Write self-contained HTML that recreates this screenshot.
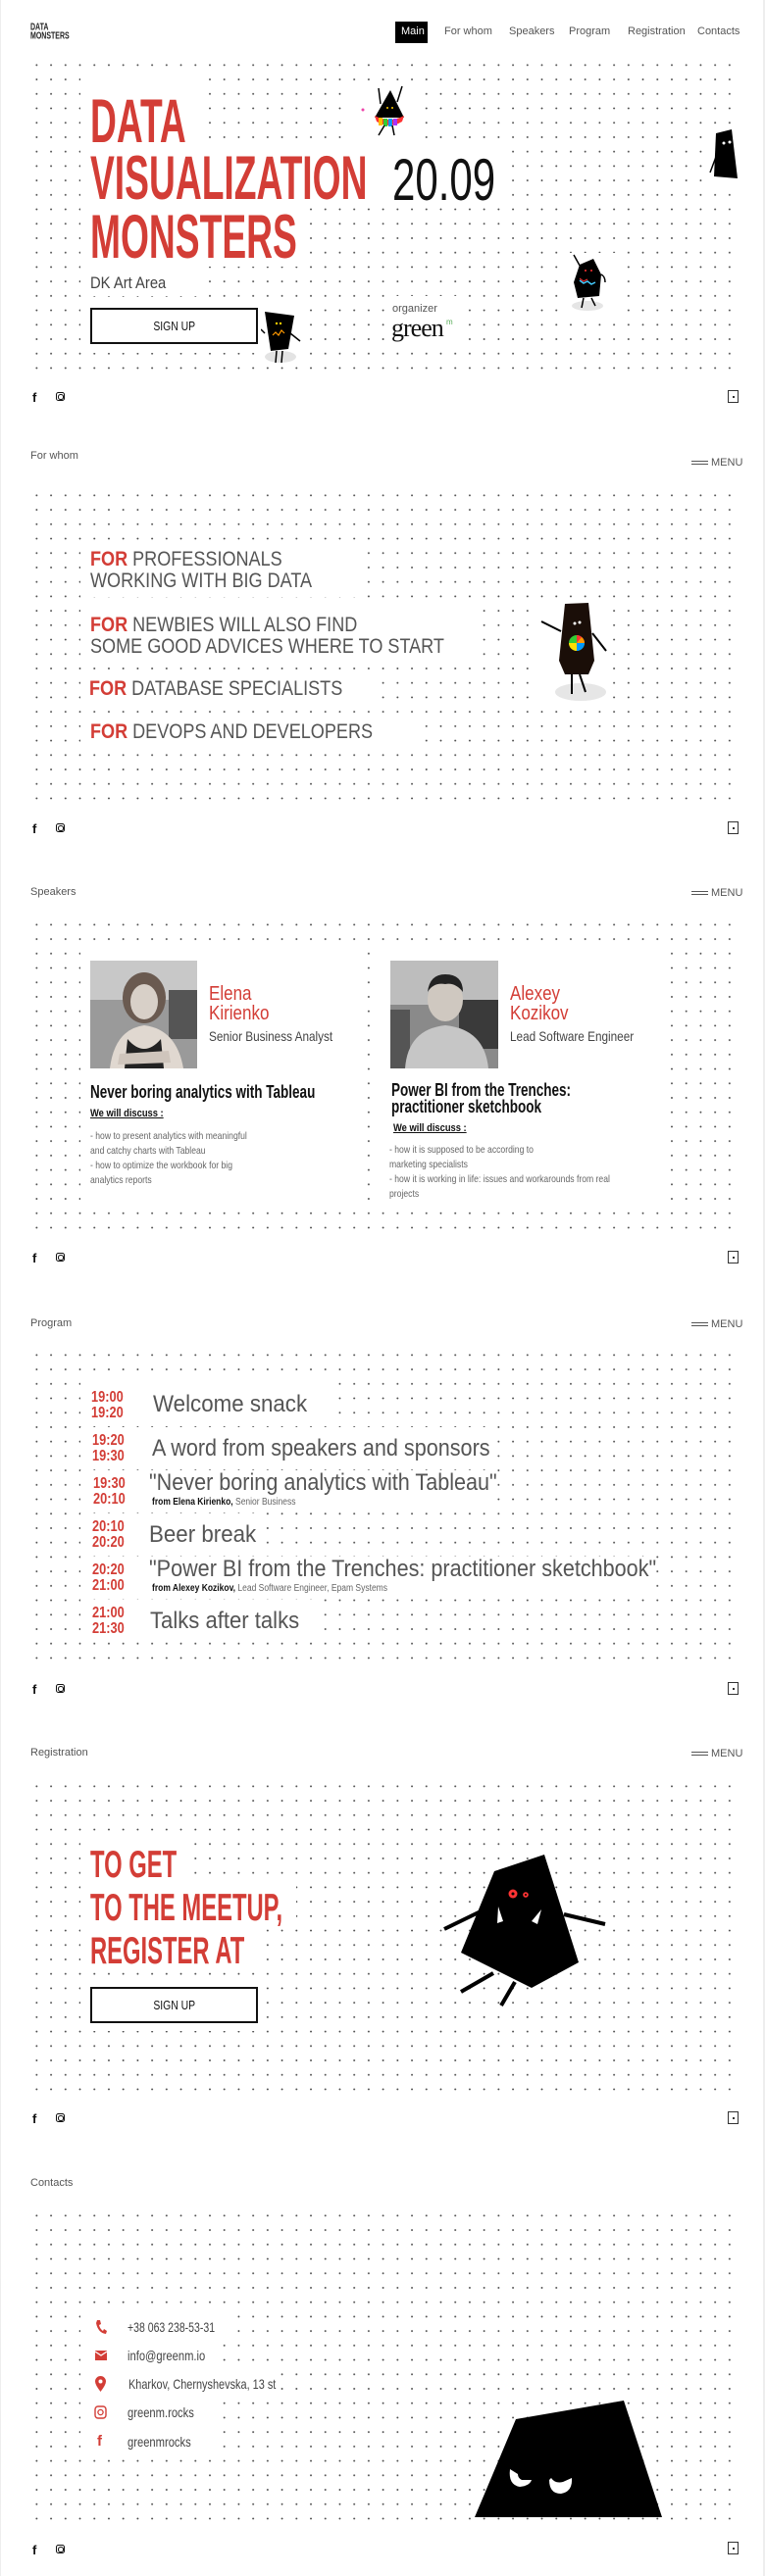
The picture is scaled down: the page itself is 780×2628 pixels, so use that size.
<!DOCTYPE html>
<html><head><meta charset="utf-8">
<style>
*{margin:0;padding:0;box-sizing:border-box}
body{width:780px;height:2628px;background:#fff;font-family:"Liberation Sans",sans-serif;color:#222;position:relative;overflow:hidden}
.a{position:absolute;white-space:nowrap;line-height:1}
.dots{position:absolute;left:30px;width:722px;height:324px;background-image:radial-gradient(circle at center,#444 0,#444 0.7px,transparent 1.1px);background-size:14.72px 14.72px}
.w{position:absolute;background:#fff}
.sc{transform-origin:0 0}
.red{color:#d33d36}
.lbl{font-size:11px;color:#555}
.menu{font-size:11px;color:#555}
.menu i{position:absolute;left:-20px;width:17px;height:4px;border-top:1px solid #555;border-bottom:1px solid #555;top:3px}
.btn{position:absolute;border:2px solid #111;background:#fff;width:171px;height:37px;text-align:center;font-size:13px;line-height:33px;color:#111}
.btn span{display:inline-block;transform:scaleX(.8)}
.sq{position:absolute;left:742px;width:11px;height:13px;border:1px solid #333}
.sq:after{content:"";position:absolute;left:4px;top:5px;width:2px;height:2px;background:#333}
.fb{position:absolute;left:33px;font-weight:bold;font-size:13px;line-height:1;color:#111}
.ig{position:absolute;left:57px;width:9px;height:9px;border:1.3px solid #111;border-radius:2.5px}
.ig:after{content:"";position:absolute;left:1.3px;top:1.3px;width:3.5px;height:3.5px;border:1.2px solid #111;border-radius:50%}
</style></head><body>
<div style="position:absolute;left:0;top:0;width:1px;height:2628px;background:#eee"></div>
<div style="position:absolute;right:0;top:0;width:2px;height:2628px;background:#eee"></div>

<!-- HERO -->
<div class="a sc" style="left:31px;top:23px;font-size:10px;font-weight:bold;transform:scale(.7,1.05)">DATA</div>
<div class="a sc" style="left:31px;top:32px;font-size:10px;font-weight:bold;transform:scale(.7,1.05)">MONSTERS</div>
<div style="position:absolute;left:403px;top:22px;width:33px;height:22px;background:#000"></div>
<div class="a" style="left:409px;top:27px;font-size:11px;color:#fff">Main</div>
<div class="a" style="left:453px;top:27px;font-size:11px;color:#555">For whom</div>
<div class="a" style="left:519px;top:27px;font-size:11px;color:#555">Speakers</div>
<div class="a" style="left:580px;top:27px;font-size:11px;color:#555">Program</div>
<div class="a" style="left:640px;top:27px;font-size:11px;color:#555">Registration</div>
<div class="a" style="left:711px;top:27px;font-size:11px;color:#555">Contacts</div>

<div class="dots" style="top:58.6px"></div>
<div class="w" style="left:82px;top:80px;width:120px;height:72px"></div>
<div class="w" style="left:82px;top:150px;width:435px;height:62px"></div>
<div class="w" style="left:82px;top:210px;width:232px;height:62px"></div>
<div class="w" style="left:82px;top:272px;width:123px;height:30px"></div>
<div class="w" style="left:82px;top:305px;width:188px;height:55px"></div>
<div class="w" style="left:392px;top:302px;width:78px;height:52px"></div>
<div class="w" style="left:355px;top:84px;width:72px;height:58px"></div>
<div class="w" style="left:570px;top:258px;width:58px;height:62px"></div>
<div class="w" style="left:264px;top:312px;width:48px;height:60px"></div>
<div class="w" style="left:716px;top:128px;width:40px;height:60px"></div>

<div class="a sc red" style="left:92px;top:94px;font-size:48px;font-weight:bold;transform:scale(.775,1.31)">DATA</div>
<div class="a sc red" style="left:92px;top:152px;font-size:48px;font-weight:bold;transform:scale(.775,1.31)">VISUALIZATION</div>
<div class="a sc red" style="left:92px;top:212px;font-size:48px;font-weight:bold;transform:scale(.775,1.31)">MONSTERS</div>
<div class="a sc" style="left:400px;top:154px;font-size:60px;color:#111;transform:scaleX(.7)">20.09</div>
<div class="a sc" style="left:92px;top:280px;font-size:17px;color:#444;transform:scaleX(.87)">DK Art Area</div>
<div class="btn" style="left:92px;top:314px"><span>SIGN UP</span></div>
<div class="a" style="left:400px;top:310px;font-size:11px;color:#555">organizer</div>
<div class="a" style="left:399px;top:322px;font-family:'Liberation Serif',serif;font-size:26px;letter-spacing:-1px;color:#111">green</div>
<div class="a" style="left:455px;top:325px;font-size:8px;color:#5a5">m</div>

<svg style="position:absolute;left:360px;top:86px" width="66" height="56" viewBox="0 0 66 56">
<line x1="28" y1="20" x2="26" y2="4" stroke="#000" stroke-width="1.5"/><line x1="45" y1="18" x2="50" y2="2" stroke="#000" stroke-width="1.5"/>
<polygon points="38,6 52,34 22,34" fill="#000"/>
<path d="M22,32 Q37,40 52,32 L50,38 Q37,46 24,38Z" fill="#f33"/>
<path d="M26,34 h4 v8 h-4z" fill="#fb0"/><path d="M31,35 h4 v8 h-4z" fill="#3c3"/><path d="M36,35 h4 v8 h-4z" fill="#09f"/><path d="M41,35 h4 v7 h-4z" fill="#a3f"/>
<circle cx="35" cy="24" r="1" fill="#fc0"/><circle cx="40" cy="24" r="1" fill="#fc0"/>
<line x1="32" y1="42" x2="26" y2="52" stroke="#000" stroke-width="1.5"/><line x1="40" y1="42" x2="42" y2="52" stroke="#000" stroke-width="1.5"/>
<circle cx="10" cy="26" r="1.5" fill="#e4a"/></svg>
<svg style="position:absolute;left:720px;top:130px" width="36" height="56" viewBox="0 0 36 56">
<polygon points="10,6 26,2 32,52 8,50" fill="#000"/><line x1="10" y1="30" x2="4" y2="46" stroke="#000" stroke-width="1.5"/>
<circle cx="18" cy="16" r="1.5" fill="#fff"/><circle cx="24" cy="15" r="1.5" fill="#fff"/></svg>
<svg style="position:absolute;left:575px;top:258px" width="52" height="62" viewBox="0 0 52 62">
<ellipse cx="24" cy="54" rx="16" ry="5" fill="#e5e5e5"/>
<line x1="10" y1="2" x2="20" y2="20" stroke="#000" stroke-width="1.5"/>
<polygon points="16,12 30,6 38,22 36,44 14,46 10,30" fill="#000"/>
<path d="M16,28 l4,3 l4,-2 l4,3 l4,-2" stroke="#4cf" stroke-width="1.5" fill="none"/><path d="M16,26 l4,3 l4,-2" stroke="#f33" stroke-width="1" fill="none"/>
<circle cx="22" cy="18" r="1" fill="#f33"/><circle cx="28" cy="18" r="1" fill="#f33"/>
<line x1="20" y1="46" x2="18" y2="56" stroke="#000" stroke-width="1.5"/><line x1="28" y1="46" x2="32" y2="54" stroke="#000" stroke-width="1.5"/>
<path d="M38,22 q4,2 4,8" stroke="#000" stroke-width="1.5" fill="none"/></svg>
<svg style="position:absolute;left:266px;top:314px" width="46" height="58" viewBox="0 0 46 58">
<ellipse cx="20" cy="50" rx="16" ry="6" fill="#e3e3e3"/>
<polygon points="4,4 34,8 28,42 10,44" fill="#000"/>
<line x1="4" y1="26" x2="0" y2="22" stroke="#000" stroke-width="1.5"/><line x1="30" y1="26" x2="40" y2="34" stroke="#000" stroke-width="1.5"/>
<circle cx="16" cy="16" r="1.2" fill="#fc0"/><circle cx="20" cy="16" r="1.2" fill="#fc0"/>
<path d="M12,28 l3,-3 l3,3 l3,-5 l3,3" stroke="#f90" stroke-width="1.2" fill="none"/>
<line x1="16" y1="44" x2="15" y2="56" stroke="#000" stroke-width="1.5"/><line x1="22" y1="44" x2="21" y2="56" stroke="#000" stroke-width="1.5"/></svg>

<div class="fb" style="top:399px">f</div><div class="ig" style="top:400px"></div>
<div class="sq" style="top:398px"></div>

<!-- FOR WHOM -->
<div class="a lbl" style="left:31px;top:460px">For whom</div>
<div class="a menu" style="left:725px;top:467px"><i></i>MENU</div>
<div class="dots" style="top:497.6px"></div>
<div class="w" style="left:82px;top:553px;width:290px;height:56px"></div>
<div class="w" style="left:82px;top:620px;width:408px;height:56px"></div>
<div class="w" style="left:82px;top:684px;width:303px;height:36px"></div>
<div class="w" style="left:82px;top:727px;width:348px;height:36px"></div>
<div class="w" style="left:542px;top:612px;width:82px;height:108px"></div>
<div class="a sc" style="left:92px;top:560px;font-size:21px;color:#555;transform:scaleX(.86)"><b class="red">FOR</b> PROFESSIONALS</div>
<div class="a sc" style="left:92px;top:582px;font-size:21px;color:#555;transform:scaleX(.86)">WORKING WITH BIG DATA</div>
<div class="a sc" style="left:92px;top:627px;font-size:21px;color:#555;transform:scaleX(.86)"><b class="red">FOR</b> NEWBIES WILL ALSO FIND</div>
<div class="a sc" style="left:92px;top:649px;font-size:21px;color:#555;transform:scaleX(.86)">SOME GOOD ADVICES WHERE TO START</div>
<div class="a sc" style="left:91px;top:692px;font-size:21px;color:#555;transform:scaleX(.86)"><b class="red">FOR</b> DATABASE SPECIALISTS</div>
<div class="a sc" style="left:92px;top:736px;font-size:21px;color:#555;transform:scaleX(.86)"><b class="red">FOR</b> DEVOPS AND DEVELOPERS</div>
<svg style="position:absolute;left:546px;top:612px" width="86" height="108" viewBox="0 0 86 108">
<ellipse cx="46" cy="94" rx="26" ry="9" fill="#e6e6e6"/>
<polygon points="30,4 54,3 60,62 54,76 30,76 24,62" fill="#1a0e08"/>
<line x1="26" y1="32" x2="6" y2="22" stroke="#000" stroke-width="2"/><line x1="58" y1="34" x2="72" y2="52" stroke="#000" stroke-width="2"/>
<circle cx="42" cy="44" r="8" fill="#3c3"/><path d="M42,44 L42,36 A8,8 0 0 1 50,44Z" fill="#f33"/><path d="M42,44 L50,44 A8,8 0 0 1 42,52Z" fill="#09f"/><path d="M42,44 L42,52 A8,8 0 0 1 34,44Z" fill="#fd0"/><path d="M42,44 L47,38 A8,8 0 0 1 50,44Z" fill="#f90"/>
<circle cx="40" cy="24" r="1.5" fill="#fff"/><circle cx="45" cy="23" r="1.5" fill="#fff"/>
<line x1="37" y1="76" x2="37" y2="96" stroke="#000" stroke-width="2"/><line x1="45" y1="76" x2="51" y2="94" stroke="#000" stroke-width="2"/></svg>
<div class="fb" style="top:839px">f</div><div class="ig" style="top:840px"></div>
<div class="sq" style="top:838px"></div>

<!-- SPEAKERS -->
<div class="a lbl" style="left:31px;top:905px">Speakers</div>
<div class="a menu" style="left:725px;top:906px"><i></i>MENU</div>
<div class="dots" style="top:935.6px"></div>
<div class="w" style="left:82px;top:970px;width:288px;height:262px"></div>
<div class="w" style="left:384px;top:970px;width:295px;height:262px"></div>
<svg style="position:absolute;left:92px;top:980px" width="109" height="110" viewBox="0 0 109 110">
<rect width="109" height="110" fill="#9a9a9a"/><rect x="0" y="0" width="109" height="40" fill="#c8c8c8"/><rect x="80" y="30" width="29" height="50" fill="#555"/>
<ellipse cx="55" cy="38" rx="22" ry="26" fill="#6a5a50"/><ellipse cx="55" cy="42" rx="14" ry="18" fill="#d8d0c8"/>
<path d="M20,110 Q25,70 55,66 Q88,70 95,110Z" fill="#e0d8d0"/><path d="M38,80 Q55,100 72,80 L75,110 L35,110Z" fill="#222"/>
<path d="M30,95 L80,92 L82,104 L28,106Z" fill="#cfc5bc"/></svg>
<svg style="position:absolute;left:398px;top:980px" width="110" height="110" viewBox="0 0 110 110">
<rect width="110" height="110" fill="#8a8a8a"/><rect width="110" height="45" fill="#bdbdbd"/><rect x="70" y="40" width="40" height="50" fill="#3a3a3a"/><rect x="0" y="50" width="20" height="60" fill="#555"/>
<ellipse cx="56" cy="40" rx="18" ry="22" fill="#cfc8c0"/><path d="M38,32 Q40,14 56,14 Q74,14 74,32 Q66,22 56,24 Q44,22 38,32Z" fill="#222"/>
<path d="M15,110 Q18,70 56,66 Q96,70 100,110Z" fill="#c6c6c6"/></svg>
<div class="a sc red" style="left:213px;top:1004px;font-size:20px;transform:scaleX(.85)">Elena</div>
<div class="a sc red" style="left:213px;top:1024px;font-size:20px;transform:scaleX(.85)">Kirienko</div>
<div class="a sc" style="left:213px;top:1050px;font-size:14px;color:#444;transform:scaleX(.84)">Senior Business Analyst</div>
<div class="a sc red" style="left:520px;top:1004px;font-size:20px;transform:scaleX(.85)">Alexey</div>
<div class="a sc red" style="left:520px;top:1024px;font-size:20px;transform:scaleX(.85)">Kozikov</div>
<div class="a sc" style="left:520px;top:1050px;font-size:14px;color:#444;transform:scaleX(.84)">Lead Software Engineer</div>
<div class="a sc" style="left:92px;top:1105px;font-size:18px;font-weight:bold;color:#111;transform:scaleX(.75)">Never boring analytics with Tableau</div>
<div class="a sc" style="left:399px;top:1103px;font-size:18px;font-weight:bold;color:#111;transform:scaleX(.75)">Power BI from the Trenches:</div>
<div class="a sc" style="left:399px;top:1120px;font-size:18px;font-weight:bold;color:#111;transform:scaleX(.75)">practitioner sketchbook</div>
<div class="a sc" style="left:92px;top:1131px;font-size:11px;font-weight:bold;color:#111;text-decoration:underline;transform:scaleX(.85)">We will discuss :</div>
<div class="a sc" style="left:401px;top:1146px;font-size:11px;font-weight:bold;color:#111;text-decoration:underline;transform:scaleX(.85)">We will discuss :</div>
<div class="a sc" style="left:92px;top:1152px;font-size:10.5px;line-height:15px;color:#666;transform:scaleX(.82)">- how to present analytics with meaningful<br>and catchy charts with Tableau<br>- how to optimize the workbook for big<br>analytics reports</div>
<div class="a sc" style="left:397px;top:1166px;font-size:10.5px;line-height:15px;color:#666;transform:scaleX(.82)">- how it is supposed to be according to<br>marketing specialists<br>- how it is working in life: issues and workarounds from real<br>projects</div>
<div class="fb" style="top:1277px">f</div><div class="ig" style="top:1278px"></div>
<div class="sq" style="top:1276px"></div>

<!-- PROGRAM -->
<div class="a lbl" style="left:31px;top:1345px">Program</div>
<div class="a menu" style="left:725px;top:1346px"><i></i>MENU</div>
<div class="dots" style="top:1374.6px"></div>
<div class="w" style="left:82px;top:1410px;width:262px;height:44px"></div>
<div class="w" style="left:82px;top:1456px;width:422px;height:42px"></div>
<div class="w" style="left:82px;top:1500px;width:422px;height:42px"></div>
<div class="w" style="left:82px;top:1544px;width:186px;height:42px"></div>
<div class="w" style="left:82px;top:1588px;width:584px;height:42px"></div>
<div class="w" style="left:82px;top:1632px;width:245px;height:42px"></div>
<div class="a sc red" style="left:93px;top:1418px;font-size:16px;font-weight:bold;line-height:16px;transform:scaleX(.8)">19:00<br>19:20</div>
<div class="a sc red" style="left:94px;top:1462px;font-size:16px;font-weight:bold;line-height:16px;transform:scaleX(.8)">19:20<br>19:30</div>
<div class="a sc red" style="left:95px;top:1506px;font-size:16px;font-weight:bold;line-height:16px;transform:scaleX(.8)">19:30<br>20:10</div>
<div class="a sc red" style="left:94px;top:1550px;font-size:16px;font-weight:bold;line-height:16px;transform:scaleX(.8)">20:10<br>20:20</div>
<div class="a sc red" style="left:94px;top:1594px;font-size:16px;font-weight:bold;line-height:16px;transform:scaleX(.8)">20:20<br>21:00</div>
<div class="a sc red" style="left:94px;top:1638px;font-size:16px;font-weight:bold;line-height:16px;transform:scaleX(.8)">21:00<br>21:30</div>
<div class="a sc" style="left:156px;top:1421px;font-size:24px;color:#555;transform:scaleX(.93)">Welcome snack</div>
<div class="a sc" style="left:155px;top:1466px;font-size:24px;color:#555;transform:scaleX(.9)">A word from speakers and sponsors</div>
<div class="a sc" style="left:152px;top:1501px;font-size:24px;color:#555;transform:scaleX(.9)">"Never boring analytics with Tableau"</div>
<div class="a sc" style="left:155px;top:1528px;font-size:10px;color:#666;transform:scaleX(.85)"><b style="color:#111">from Elena Kirienko,</b> Senior Business</div>
<div class="a sc" style="left:152px;top:1554px;font-size:24px;color:#555;transform:scaleX(.93)">Beer break</div>
<div class="a sc" style="left:152px;top:1589px;font-size:24px;color:#555;transform:scaleX(.9)">"Power BI from the Trenches: practitioner sketchbook"</div>
<div class="a sc" style="left:155px;top:1616px;font-size:10px;color:#666;transform:scaleX(.85)"><b style="color:#111">from Alexey Kozikov,</b> Lead Software Engineer, Epam Systems</div>
<div class="a sc" style="left:153px;top:1642px;font-size:24px;color:#555;transform:scaleX(.92)">Talks after talks</div>
<div class="fb" style="top:1717px">f</div><div class="ig" style="top:1718px"></div>
<div class="sq" style="top:1716px"></div>

<!-- REGISTRATION -->
<div class="a lbl" style="left:31px;top:1783px">Registration</div>
<div class="a menu" style="left:725px;top:1784px"><i></i>MENU</div>
<div class="dots" style="top:1814.6px"></div>
<div class="w" style="left:82px;top:1878px;width:112px;height:44px"></div>
<div class="w" style="left:82px;top:1922px;width:220px;height:46px"></div>
<div class="w" style="left:82px;top:1966px;width:185px;height:44px"></div>
<div class="w" style="left:82px;top:2018px;width:188px;height:54px"></div>
<div class="a sc red" style="left:92px;top:1883px;font-size:39px;font-weight:bold;transform:scaleX(.61)">TO GET</div>
<div class="a sc red" style="left:92px;top:1927px;font-size:39px;font-weight:bold;transform:scaleX(.61)">TO THE MEETUP,</div>
<div class="a sc red" style="left:92px;top:1971px;font-size:39px;font-weight:bold;transform:scaleX(.61)">REGISTER AT</div>
<div class="btn" style="left:92px;top:2027px"><span>SIGN UP</span></div>
<svg style="position:absolute;left:445px;top:1885px" width="180" height="170" viewBox="445 1885 180 170">
<polygon points="504,1909 555,1892 590,2002 542,2028 470,1992" fill="#000"/>
<line x1="490" y1="1950" x2="453" y2="1968" stroke="#000" stroke-width="4"/>
<line x1="575" y1="1953" x2="617" y2="1963" stroke="#000" stroke-width="4"/>
<line x1="503" y1="2013" x2="470" y2="2032" stroke="#000" stroke-width="4"/>
<line x1="525" y1="2022" x2="511" y2="2046" stroke="#000" stroke-width="4"/>
<circle cx="523" cy="1932" r="4.5" fill="#f33"/><circle cx="523" cy="1932" r="1.5" fill="#000"/>
<circle cx="536" cy="1933" r="2.8" fill="#f33"/><circle cx="536" cy="1933" r="1" fill="#000"/>
<polygon points="508,1945 513,1960 507,1962" fill="#fff"/><polygon points="552,1948 548,1963 542,1960" fill="#fff"/></svg>
<div class="fb" style="top:2155px">f</div><div class="ig" style="top:2156px"></div>
<div class="sq" style="top:2154px"></div>

<!-- CONTACTS -->
<div class="a lbl" style="left:31px;top:2222px">Contacts</div>
<div class="dots" style="top:2252.6px"></div>
<div class="w" style="left:82px;top:2360px;width:150px;height:28px"></div>
<div class="w" style="left:82px;top:2390px;width:140px;height:28px"></div>
<div class="w" style="left:82px;top:2419px;width:204px;height:28px"></div>
<div class="w" style="left:82px;top:2448px;width:140px;height:28px"></div>
<div class="w" style="left:82px;top:2477px;width:140px;height:28px"></div>
<svg style="position:absolute;left:96px;top:2366px" width="14" height="16" viewBox="0 0 14 16"><path d="M3,1 L6,1 L7,5 L5,6 Q6,10 9,12 L10,10 L13,12 L12,15 Q4,14 2,4 Z" fill="#d33d36"/></svg>
<svg style="position:absolute;left:97px;top:2398px" width="12" height="10" viewBox="0 0 12 10"><rect width="12" height="10" fill="#d33d36"/><path d="M0,1 L6,5 L12,1" stroke="#fff" stroke-width="1.2" fill="none"/></svg>
<svg style="position:absolute;left:97px;top:2424px" width="11" height="16" viewBox="0 0 11 16"><path d="M5.5,0 A5.5,5.5 0 0 1 11,5.5 Q11,9 5.5,16 Q0,9 0,5.5 A5.5,5.5 0 0 1 5.5,0Z" fill="#d33d36"/><circle cx="5.5" cy="5.5" r="2" fill="#fff"/></svg>
<svg style="position:absolute;left:96px;top:2454px" width="13" height="14" viewBox="0 0 13 14"><rect x="1" y="1" width="11" height="12" rx="3" fill="none" stroke="#d33d36" stroke-width="1.4"/><circle cx="6.5" cy="7" r="2.6" fill="none" stroke="#d33d36" stroke-width="1.3"/></svg>
<div class="a" style="left:99px;top:2483px;font-size:15px;font-weight:bold;color:#d33d36">f</div>
<div class="a sc" style="left:130px;top:2367px;font-size:14px;color:#444;transform:scaleX(.75)">+38 063 238-53-31</div>
<div class="a sc" style="left:130px;top:2396px;font-size:14px;color:#444;transform:scaleX(.8)">info@greenm.io</div>
<div class="a sc" style="left:131px;top:2425px;font-size:14px;color:#444;transform:scaleX(.78)">Kharkov, Chernyshevska, 13 st</div>
<div class="a sc" style="left:130px;top:2454px;font-size:14px;color:#444;transform:scaleX(.8)">greenm.rocks</div>
<div class="a sc" style="left:130px;top:2484px;font-size:14px;color:#444;transform:scaleX(.8)">greenmrocks</div>
<svg style="position:absolute;left:480px;top:2445px" width="200" height="126" viewBox="480 2445 200 126">
<polygon points="526,2468 636,2449 675,2568 484,2568" fill="#000"/>
<path d="M520,2519 Q518,2535 530,2537 Q540,2536 542,2530 L532,2530 Q528,2528 528,2524Z" fill="#fff"/>
<path d="M560,2530 Q560,2544 572,2544 Q584,2542 583,2528 L574,2532 Q566,2534 562,2528Z" fill="#fff"/></svg>
<div class="fb" style="top:2595px">f</div><div class="ig" style="top:2596px"></div>
<div class="sq" style="top:2593px"></div>
</body></html>
